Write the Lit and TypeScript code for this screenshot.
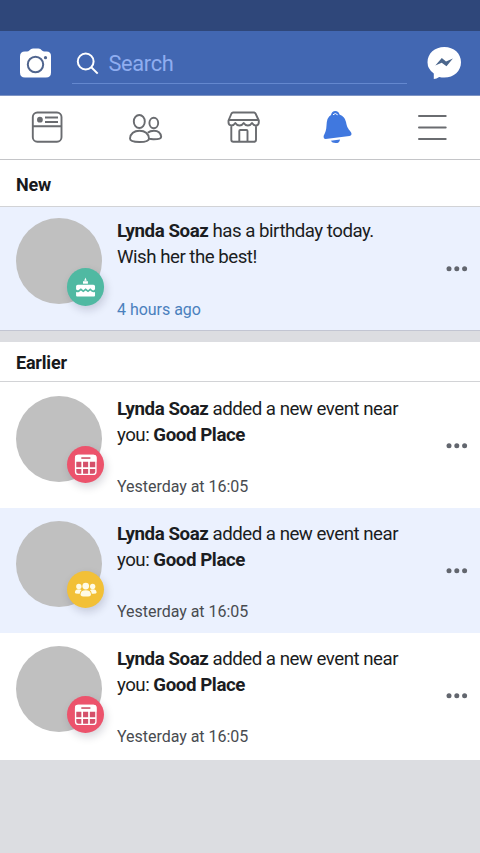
import { LitElement, html, svg, css } from "lit";
import { customElement, property } from "lit/decorators.js";
import { classMap } from "lit/directives/class-map.js";

type Kind = "birthday" | "event" | "group";

const badgeIcons: Record<Kind, unknown> = {
  birthday: svg`
    <g fill="#fff">
      <path d="M18.700 9.500L20 13H17.400Z"/>
      <rect x="16.200" y="13.400" width="5" height="2.500"/>
      <path d="M9.200 18.600q0-1.700 1.700-1.700h15.800q1.700 0 1.700 1.700v3q-1.600 2-3.200.4l-1.600-1.500-2.300 2-2.400-2-2.400 2-2.400-2-2 1.600q-1.600 1.300-2.900-.5Z"/>
      <path d="M9.200 24.200q1.800 1 3.300-.2l1.600-1.300 2.400 1.900 2.400-1.900 2.400 1.900 2.300-1.900q2.100 2.500 4.800 1.500v3.600q0 1-1 1h-17.200q-1 0-1-1Z"/>
    </g>`,
  event: svg`
    <rect x="8.700" y="9.600" width="20.600" height="19.200" rx="2.800" fill="#d5506a" stroke="#fff" stroke-width="1.400"/>
    <path d="M8.100 15.900V11.600q0-2.700 2.700-2.700H27.200q2.700 0 2.700 2.700V15.900Z" fill="#fff"/>
    <path d="M14.500 12.200H23.700" stroke="#c9445c" stroke-width="1.500"/>
    <path d="M8.700 22.400H29.200M15.400 15V28.500M22.300 15V28.500" stroke="#fff" stroke-width="1.700"/>`,
  group: svg`
    <g fill="#fffbe6">
      <circle cx="12" cy="15.600" r="2.700"/><circle cx="26" cy="15.600" r="2.700"/>
      <path d="M8 22q0-3.400 4-3.400 2 0 2.700.8-1.700 1.300-1.800 3.600-4.900.3-4.900-1Z"/>
      <path d="M30 22q0-3.400-4-3.400-2 0-2.700.8 1.700 1.300 1.800 3.600 4.900.3 4.900-1Z"/>
      <circle cx="19" cy="15.300" r="3.400"/>
      <path d="M13.700 24q0-4.500 5.300-4.500t5.300 4.500q0 1.900-5.300 1.900t-5.300-1.900Z"/>
    </g>`,
};

@customElement("notification-item")
class NotificationItem extends LitElement {
  @property() kind: Kind = "event";
  @property() time = "";
  @property({ type: Boolean }) unread = false;
  @property({ type: Boolean }) recent = false;

  static styles = css`
    :host { display: block; }
    .item { box-sizing: border-box; height: 100%; display: flex; padding: 11px 12px 0 16px; }
    .unread { background: #ebf1fe; }
    .avatar { position: relative; width: 86px; height: 86px; border-radius: 50%; background: #c0c0c0; flex: none; }
    .badge { position: absolute; left: 50.500px; top: 50px; width: 37.500px; height: 37.500px; border-radius: 50%; box-shadow: 2px 4px 8px rgba(20, 20, 50, .17); }
    .badge svg { display: block; width: 100%; height: 100%; }
    .birthday { background: #50b9a2; }
    .event { background: #ec536c; }
    .group { background: #f2c037; }
    .body { flex: 1; margin-left: 15px; display: flex; flex-direction: column; }
    .message { font-size: 18.700px; line-height: 26.300px; letter-spacing: -.5px; color: #1b1d22; }
    .message ::slotted(b) { letter-spacing: -.42px; }
    .time { margin-top: 27px; font-size: 16px; line-height: 24px; letter-spacing: -.03px; color: #484b50; }
    .recent { color: #4a80bd; }
    .more { margin-top: 47.500px; flex: none; }
  `;

  render() {
    return html`
      <div class=${classMap({ item: true, unread: this.unread })}>
        <div class="avatar">
          <div class="badge ${this.kind}"><svg viewBox="0 0 38 38">${badgeIcons[this.kind]}</svg></div>
        </div>
        <div class="body">
          <div class="message"><slot></slot></div>
          <div class=${classMap({ time: true, recent: this.recent })}>${this.time}</div>
        </div>
        <svg class="more" width="22" height="6" viewBox="0 0 22 6" fill="#62666e">
          <circle cx="3" cy="2.700" r="2.500"/><circle cx="10.800" cy="2.700" r="2.500"/><circle cx="18.600" cy="2.700" r="2.500"/>
        </svg>
      </div>`;
  }
}

@customElement("app-root")
class AppRoot extends LitElement {
  static styles = css`
    :host { display: flex; flex-direction: column; height: 853px; background: #dcdde1; font-family: Roboto, sans-serif; overflow: hidden; }
    svg { display: block; flex: none; }
    .status { height: 31px; background: #2f477a; flex: none; }
    .header { box-sizing: border-box; height: 65px; background: #4267b2; border-bottom: 1px solid #7e94c4; display: flex; padding: 0 18px 0 19px; flex: none; }
    .camera { margin-top: 16px; }
    .search { box-sizing: border-box; width: 335px; height: 53px; margin: 0 20px; border-bottom: 1px solid #6488cf; display: flex; padding-left: 4px; }
    .search svg { margin-top: 21px; }
    .placeholder { margin-left: 9.500px; font-size: 21.800px; line-height: 65px; color: #8fadf0; letter-spacing: -.35px; }
    .messenger { margin-top: 15px; }
    .tabs { box-sizing: border-box; height: 64px; background: #fff; border-bottom: 1px solid #c4c5c8; display: grid; grid-template-columns: 94px 102px 96px 91px 97px; align-items: center; justify-items: center; padding-bottom: 1px; flex: none; }
    .heading { box-sizing: border-box; background: #fff; padding-left: 16px; font-size: 18px; font-weight: 700; letter-spacing: -.2px; color: #18191c; border-bottom: 1px solid #d2d3d6; flex: none; }
    .new { height: 47px; line-height: 49px; }
    .earlier { height: 40px; line-height: 42px; }
    .first { height: 123px; flex: none; border-bottom: 1px solid #c2c5d2; margin-bottom: 11px; }
    .list { background: #fff; flex: none; display: grid; grid-template-rows: 126px 125px 126.500px; }
    .lead { padding-top: 2.500px; }
    .tinted { padding-top: 1.500px; background: #ebf1fe; }
    .last { padding-top: 1.500px; }
  `;

  render() {
    return html`
      <div class="status"></div>
      <div class="header">
        <svg class="camera" width="33" height="34" viewBox="0 0 33 34">
          <path d="M6 4.500H8Q9.500 4.500 10.300 3.500Q12 1.500 14 1.500H19.500Q21.500 1.500 23 3.500Q24 4.500 25.500 4.500H27.500Q32 4.500 32 9V25.500Q32 30.500 27 30.500H6Q1 30.500 1 25.500V9.500Q1 4.500 6 4.500Z" fill="#fff"/>
          <circle cx="16.500" cy="17.500" r="7.700" fill="none" stroke="#50658e" stroke-width="2"/>
          <circle cx="26.500" cy="10.700" r="1.600" fill="#50658e"/>
        </svg>
        <div class="search">
          <svg width="23" height="24" viewBox="0 0 23 24" fill="none" stroke="#fff" stroke-width="2"><circle cx="9.700" cy="9.500" r="7.900"/><path d="M15.300 15.300L21.700 21.600"/></svg>
          <div class="placeholder">Search</div>
        </div>
        <svg class="messenger" width="35" height="35" viewBox="0 0 35 35">
          <path d="M17.300 1C27 1 34 7.500 34 16.200S27 31.500 17.300 31.500Q14.500 31.500 12.200 30.900Q9.500 33 6.800 33V27.500Q.500 23 .500 16.200C.500 7.500 7.700 1 17.300 1Z" fill="#fff"/>
          <path d="M8.300 19.400L14.800 12L19 15.500L25.900 12.400L19.500 20.200L14.700 16.700Z" fill="#4b668c"/>
        </svg>
      </div>
      <div class="tabs">
        <svg width="34" height="34" viewBox="0 0 34 34" fill="none" stroke="#6a6c70" stroke-width="1.900">
          <rect x="2.800" y="2.500" width="28.700" height="29.200" rx="4.500"/><path d="M3 16.200H31M15 7.500H28M15 12H28"/><circle cx="9.900" cy="9.700" r="2.900" fill="#6a6c70" stroke="none"/>
        </svg>
        <svg width="36" height="34" viewBox="0 0 36 34" fill="none" stroke="#6a6c70" stroke-width="1.900">
          <ellipse cx="12.300" cy="11.500" rx="5.500" ry="6.500"/><ellipse cx="26.800" cy="13" rx="4.400" ry="5.200"/>
          <path d="M3 28.500Q4 20.800 12.500 20.800T22 28.500Q22 32 12.500 32T3 28.500ZM20.800 22.800Q23 20.800 27 20.800Q33.300 20.800 34.200 26.800Q34 29.200 27 29.200Q24 29.300 22 28.700"/>
        </svg>
        <svg width="34" height="34" viewBox="0 0 34 34" fill="none" stroke="#6a6c70" stroke-width="1.900" stroke-linejoin="round">
          <path d="M6 2.500H27Q28 2.500 28.500 3.500L31.800 10.500V12.300Q31.800 15.500 28.900 15.500Q26.500 15.500 25 13Q23.500 15.500 20.900 15.500Q18.200 15.500 16.700 13Q15.200 15.500 12.500 15.500Q9.800 15.500 8.300 13Q6.800 15.500 4.400 15.500Q1.500 15.500 1.500 12.300V10.500L4.500 3.500Q5 2.500 6 2.500ZM2 10H31.500M4.300 15.500V29.800Q4.300 31.800 6.300 31.800H27Q29 31.800 29 29.800V15.500M12.300 31.500V21Q12.300 20 13.300 20H19.500Q20.500 20 20.500 21V31.500"/>
        </svg>
        <svg width="32" height="34" viewBox="0 0 32 34" fill="#4078df">
          <path d="M3.500 29Q1.200 28.800 1.700 25.700C3.500 22 4.300 20 4.500 15.500Q4.800 7 9 5Q9.800 1 13.300 1T17.500 4.500Q23 6.500 24 12C25 18 27 19.500 29 22.300Q30.500 25.300 27.500 26Z"/>
          <path d="M11 4.800Q13.300 2.200 15.700 4.800" stroke="#fff" fill="none"/><path d="M8.700 30.700L18 29.400Q17.800 33 13.600 33Q10 33 8.700 30.700Z"/>
        </svg>
        <svg width="32" height="34" viewBox="0 0 32 34" stroke="#6a6c70" stroke-width="2" stroke-linecap="round"><path d="M3 6H29.700M3 17.500H29.700M3 29H29.700"/></svg>
      </div>
      <div class="heading new">New</div>
      <notification-item class="first" kind="birthday" time="4 hours ago" unread recent><b>Lynda Soaz</b> has a birthday today.<br>Wish her the best!</notification-item>
      <div class="heading earlier">Earlier</div>
      <div class="list">
        <notification-item class="lead" kind="event" time="Yesterday at 16:05"><b>Lynda Soaz</b> added a new event near<br>you: <b>Good Place</b></notification-item>
        <notification-item class="tinted" kind="group" time="Yesterday at 16:05" unread><b>Lynda Soaz</b> added a new event near<br>you: <b>Good Place</b></notification-item>
        <notification-item class="last" kind="event" time="Yesterday at 16:05"><b>Lynda Soaz</b> added a new event near<br>you: <b>Good Place</b></notification-item>
      </div>`;
  }
}
